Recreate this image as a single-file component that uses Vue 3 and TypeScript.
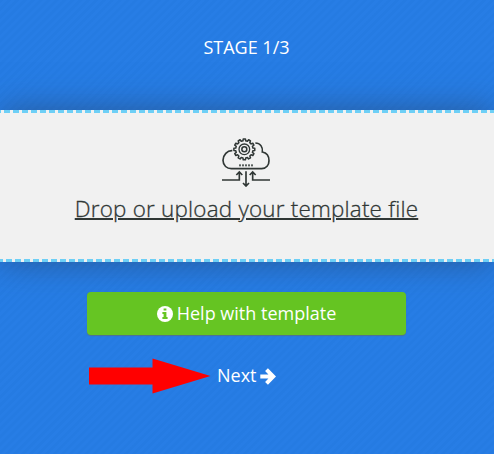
<script setup lang="ts">
const stage = { current: 1, total: 3 }
const dots: number[] = [117, 126, 135, 144, 153]

function gearPath(cx: number, cy: number, outer: number, inner: number, count: number): string {
  const points: string[] = []
  const step = 360 / count
  for (let i = 0; i < count; i++) {
    const profile: [number, number][] = [[-9, inner], [-6, outer], [6, outer], [9, inner]]
    for (const [offset, radius] of profile) {
      const angle = ((i * step + offset) * Math.PI) / 180
      points.push(`${(cx + radius * Math.sin(angle)).toFixed(2)} ${(cy - radius * Math.cos(angle)).toFixed(2)}`)
    }
  }
  return `M${points.join('L')}Z`
}

const gear = gearPath(133, 72, 31.5, 26, 12)
</script>

<template>
  <main class="page">
    <header class="stage">STAGE {{ stage.current }}/{{ stage.total }}</header>

    <section class="drop">
      <svg class="cloud" viewBox="66 38 144 147" fill="none" stroke="#303735">
        <path stroke-width="5" d="M97 76C82 75 69 89 69 105C69 121 81 130 94 130H185C199 130 207 119 207 106C207 91 198 82 187 80C189 65 181 53 166 53" />
        <path :d="gear" stroke-width="4.5" stroke-linejoin="round" />
        <circle cx="133" cy="72" r="16" stroke-width="4" />
        <circle cx="133" cy="72" r="7.500" stroke-width="4.500" />
        <g fill="#59605e" stroke="none">
          <rect v-for="x in dots" :key="x" :x="x" y="117" width="6" height="6" />
        </g>
        <path stroke-width="5" d="M66 164H118V141M109 149L118 140L127 149M210 164H158V141M149 149L158 140L167 149M138 138V181M129 173L138 182L147 173" />
      </svg>
      <a class="upload">Drop or upload your template file</a>
    </section>

    <button class="help" type="button">
      <svg class="info" viewBox="0 0 16 16">
        <circle cx="8" cy="8" r="8" fill="#fff" />
        <path fill="#66c523" d="M6.6 2.5h2.8v2.1H6.6zM5.4 6h4v5h1.2v2H5.4v-2h1.2V8H5.4z" />
      </svg>
      <span class="label">Help with template</span>
    </button>

    <div class="actions">
      <svg class="pointer" viewBox="0 0 122 36">
        <path fill="#f00" d="M0 9.500H63.500V.5L121.500 18L63.500 35.500V26.500H0Z" />
      </svg>
      <a class="next">
        <span class="label">Next</span>
        <svg class="arrow" viewBox="0 0 16 17" fill="none" stroke="#fff" stroke-width="4">
          <path d="M.3 8.500H12.500M6.500 1.700L13.200 8.500L6.500 15.300" />
        </svg>
      </a>
    </div>
  </main>
</template>

<style>
body {
  margin: 0;
}
</style>

<style scoped>
.page {
  box-sizing: border-box;
  height: 454px;
  overflow: hidden;
  display: flex;
  flex-direction: column;
  font-family: "Open Sans", sans-serif;
  font-size: 18px;
  line-height: 26px;
  color: #fff;
  background: repeating-linear-gradient(135deg, #257be2 0 2.1px, #277de5 2.8px 4.9px, #257be2 5.6px);
}

.stage {
  height: 76px;
  padding: 34px 1px 0 0;
  text-align: center;
}

.drop {
  position: relative;
  box-sizing: border-box;
  height: 152px;
  flex: none;
  padding: 28px 1px 0 0;
  display: flex;
  flex-direction: column;
  align-items: center;
  background: #f1f1f1;
  box-shadow: 0 0 32px rgba(40, 60, 90, 0.55);
}

.drop::before,
.drop::after {
  content: "";
  position: absolute;
  left: 0;
  right: 0;
  height: 3px;
}

.drop::before {
  top: 0;
  background: repeating-linear-gradient(90deg, #6dcff6 0 1px, #f1f1f1 1px 4px, #6dcff6 4px 9px);
}

.drop::after {
  bottom: 0;
  background: repeating-linear-gradient(90deg, #6dcff6 0 3px, #f1f1f1 3px 6px, #6dcff6 6px 9px);
}

.cloud {
  width: 48px;
  height: 49px;
  margin-right: 1px;
}

.upload {
  margin-top: 6px;
  font-size: 22.4px;
  font-weight: 300;
  letter-spacing: 0.23px;
  line-height: 32px;
  color: #303735;
  white-space: nowrap;
  text-decoration: underline;
  text-decoration-thickness: 2px;
  -webkit-text-stroke: 0.3px #303735;
}

.help {
  box-sizing: border-box;
  width: 319px;
  height: 43px;
  margin: 30px 0 0 87px;
  padding: 0;
  border: 0;
  border-radius: 4px;
  display: flex;
  align-items: center;
  justify-content: center;
  gap: 4px;
  font: inherit;
  color: #fff;
  background: #66c523;
  box-shadow: 0 1px 1px #50728e;
}

.label {
  padding-bottom: 2px;
}

.info {
  width: 16px;
  height: 16px;
}

.actions {
  display: flex;
  align-items: center;
  margin: 23px 0 0 89px;
}

.pointer {
  width: 122px;
  height: 36px;
}

.next {
  display: flex;
  align-items: center;
  gap: 3px;
  margin-left: 6px;
}

.arrow {
  width: 16px;
  height: 17px;
}
</style>
